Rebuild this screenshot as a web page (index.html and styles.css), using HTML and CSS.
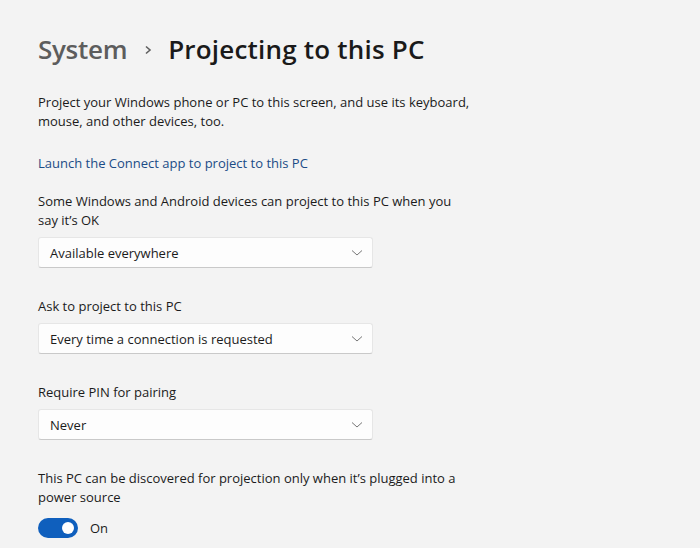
FILE: index.html
```html
<!DOCTYPE html>
<html>
<head>
<meta charset="utf-8">
<link rel="stylesheet" href="styles.css">
</head>
<body>
<main class="page">
  <h1 class="crumbs">
    <span class="crumb-parent">System</span>
    <svg class="crumb-sep" width="10" height="12" viewBox="0 0 10 12"><path d="M3 2.5 L7 6 L3 9.5" fill="none" stroke="#5f5f5f" stroke-width="1.6"/></svg>
    <span class="crumb-current">Projecting to this PC</span>
  </h1>

  <p class="desc">Project your Windows phone or PC to this screen, and use its keyboard, mouse, and other devices, too.</p>

  <a class="link" href="#">Launch the Connect app to project to this PC</a>

  <section class="setting">
    <div class="label">Some Windows and Android devices can project to this PC when you say it’s OK</div>
    <div class="select"><span>Available everywhere</span><svg class="chev" width="12" height="8" viewBox="0 0 12 8"><path d="M1 1.5 L6 6 L11 1.5" fill="none" stroke="#777" stroke-width="1"/></svg></div>
  </section>

  <section class="setting">
    <div class="label">Ask to project to this PC</div>
    <div class="select"><span>Every time a connection is requested</span><svg class="chev" width="12" height="8" viewBox="0 0 12 8"><path d="M1 1.5 L6 6 L11 1.5" fill="none" stroke="#777" stroke-width="1"/></svg></div>
  </section>

  <section class="setting">
    <div class="label">Require PIN for pairing</div>
    <div class="select"><span>Never</span><svg class="chev" width="12" height="8" viewBox="0 0 12 8"><path d="M1 1.5 L6 6 L11 1.5" fill="none" stroke="#777" stroke-width="1"/></svg></div>
  </section>

  <section class="setting">
    <div class="label">This PC can be discovered for projection only when it’s plugged into a power source</div>
    <div class="toggle-row"><span class="toggle"><span class="knob"></span></span><span>On</span></div>
  </section>
</main>
</body>
</html>
```

FILE: styles.css
```css
html, body {
  margin: 0;
  background: #f3f3f3;
}
body {
  font-family: "Open Sans", "Noto Sans", sans-serif;
  font-size: 13px;
  color: #1b1b1b;
}
.page {
  padding: 29px 0 0 38px;
  width: 480px;
}
.crumbs {
  margin: 0;
  display: flex;
  align-items: center;
  font-size: 26px;
  font-weight: 600;
  line-height: 40px;
}
.crumb-parent { color: #5d5d5d; letter-spacing: -0.3px; }
.crumb-sep { margin: 2px 15px 0 16px; }
.crumb-current { color: #1a1a1a; letter-spacing: 0.2px; }
.desc {
  margin: 24px 0 0;
  line-height: 19px;
  width: 440px;
}
.link {
  display: block;
  margin-top: 23px;
  color: #1b4c86;
  text-decoration: none;
  line-height: 19px;
}
.setting { margin-top: 19px; width: 430px; }
.setting + .setting { margin-top: 29px; }
.label { line-height: 19px; }
.select {
  margin-top: 7px;
  width: 335px;
  height: 31px;
  box-sizing: border-box;
  background: #fdfdfd;
  border: 1px solid #e6e6e6;
  border-bottom-color: #c9c9c9;
  border-radius: 3px;
  display: flex;
  align-items: center;
  justify-content: space-between;
  padding: 0 9px 0 11px;
}
.toggle-row {
  margin-top: 11px;
  display: flex;
  align-items: center;
  gap: 12px;
}
.toggle {
  width: 40px;
  height: 20px;
  border-radius: 10px;
  background: #0f5fbd;
  display: flex;
  align-items: center;
  justify-content: flex-end;
  padding-right: 4px;
  box-sizing: border-box;
}
.knob {
  width: 12px;
  height: 12px;
  border-radius: 50%;
  background: #fff;
}
```
